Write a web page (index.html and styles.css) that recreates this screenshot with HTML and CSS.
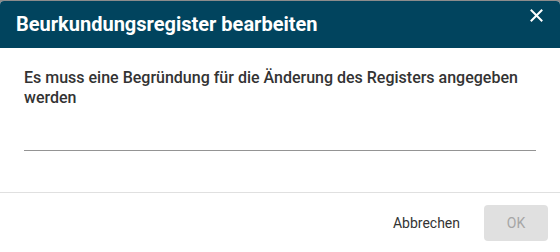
FILE: index.html
```html
<!DOCTYPE html>
<html lang="de">
<head>
  <meta charset="UTF-8" />
  <title>Beurkundungsregister bearbeiten</title>
  <link rel="stylesheet" href="styles.css">
</head>
<body>

  <div class="dialog">
    <div class="dialog-header">
      <h2>Beurkundungsregister bearbeiten</h2>
      <button class="close-button" aria-label="Schließen">
        <svg width="13" height="13" viewBox="0 0 13 13">
          <path d="M1.5 1.5 L11.5 11.5 M11.5 1.5 L1.5 11.5" stroke="#ffffff" stroke-width="2" stroke-linecap="square" fill="none"/>
        </svg>
      </button>
    </div>

    <div class="dialog-content">
      <p>Es muss eine Begründung für die Änderung des Registers angegeben werden</p>
      <div class="reason-field">
        <input type="text" id="reason" />
      </div>
    </div>

    <div class="dialog-actions">
      <button class="cancel-button">Abbrechen</button>
      <button class="ok-button" disabled>OK</button>
    </div>
  </div>

</body>
</html>
```

FILE: styles.css
```css
body {
  margin: 0;
  font-family: Roboto, 'Noto Sans', sans-serif;
  background-color: #8c8c8c;
  height: 252px;
  overflow: hidden;
}

.dialog {
  margin-top: 1px;
  background: white;
  border-radius: 4px 4px 0 0;
  height: 251px;
  overflow: hidden;
}

.dialog-header {
  display: flex;
  justify-content: space-between;
  align-items: flex-start;
  background-color: #01445e;
  padding: 11px 16px 12px;
}

.dialog-header h2 {
  margin: 0;
  font-size: 20px;
  line-height: 24px;
  font-weight: 700;
  color: white;
}

.close-button {
  background: none;
  border: none;
  padding: 0;
  margin: -3px 1px 0 0;
  width: 13px;
  height: 13px;
  cursor: pointer;
  display: flex;
}

.dialog-content {
  padding: 20px 24px 0;
}

.dialog-content p {
  margin: 0;
  font-size: 16px;
  line-height: 20px;
  font-weight: 500;
  color: #333333;
}

.reason-field {
  height: 42px;
  border-bottom: 1px solid #949494;
  margin-bottom: 41px;
  display: flex;
  align-items: flex-end;
}

.reason-field input {
  width: 100%;
  border: none;
  outline: none;
  background: transparent;
  font-family: inherit;
  font-size: 16px;
  padding: 0 0 6px;
}

.dialog-actions {
  display: flex;
  justify-content: flex-end;
  gap: 8px;
  border-top: 1px solid #e0e0e0;
  padding: 12px;
}

.dialog-actions button {
  height: 36px;
  border: none;
  border-radius: 4px;
  font-family: inherit;
  font-size: 14px;
  font-weight: 400;
  padding: 0 16px;
  cursor: pointer;
}

.cancel-button {
  background: transparent;
  color: #333333;
}

.ok-button {
  background-color: #e0e0e0;
  color: #a6a6a6;
  min-width: 64px;
}

.ok-button:disabled {
  cursor: default;
}
```
